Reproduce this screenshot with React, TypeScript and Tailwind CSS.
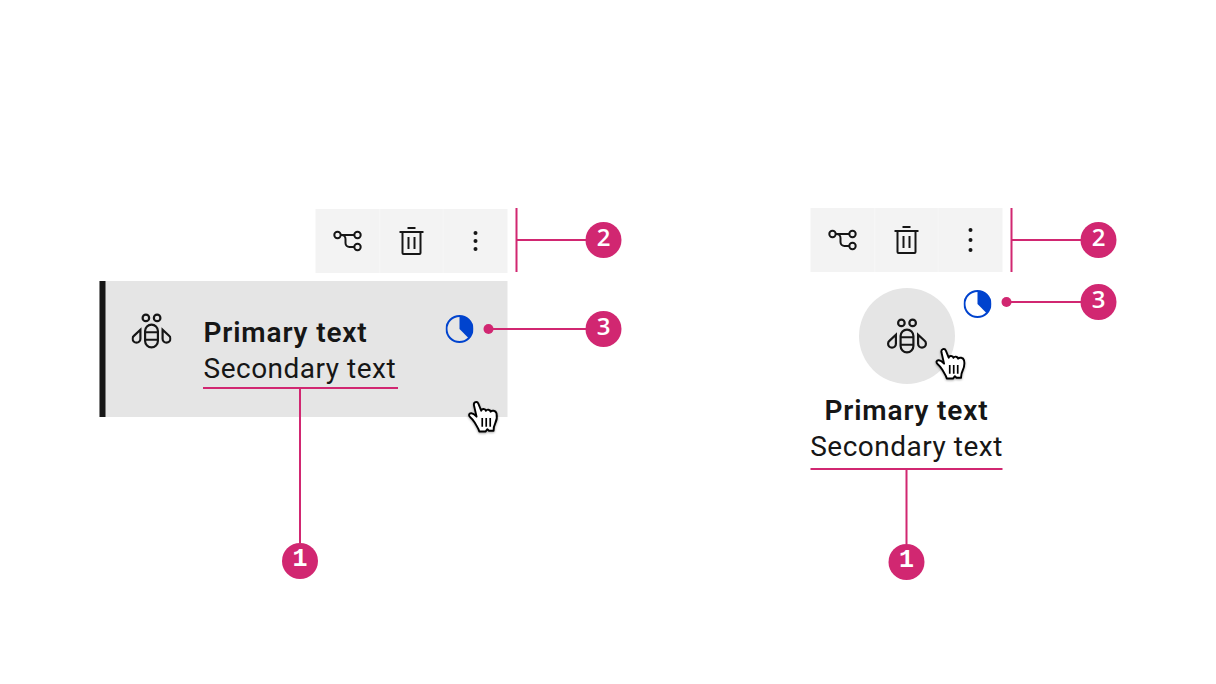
import type { ReactNode } from "react";

function Bee() {
  return (
    <svg className="h-10 w-10 shrink-0" viewBox="0 0 32 32" fill="#161616">
      <path d="M16 10a6 6 0 0 0-6 6v8a6 6 0 0 0 12 0v-8a6 6 0 0 0-6-6Zm-4.25 7.87h8.5v4.25h-8.5ZM16 28.25A4.27 4.27 0 0 1 11.75 24v-.13h8.5V24A4.27 4.27 0 0 1 16 28.25Zm4.25-12.13h-8.5V16a4.25 4.25 0 0 1 8.5 0Z" />
      <path d="M30.66 19.21 24 13v9.1a4 4 0 0 0 8 0 3.83 3.83 0 0 0-1.34-2.89ZM28 24.35a2.25 2.25 0 0 1-2.25-2.25V17l3.72 3.47A2.05 2.05 0 0 1 30.25 22 2.25 2.25 0 0 1 28 24.35Z" />
      <path d="M0 22.1a4 4 0 0 0 8 0V13l-6.66 6.21A3.88 3.88 0 0 0 0 22.1Zm2.48-1.56L6.25 17v5.1a2.25 2.25 0 0 1-4.5 0 2.05 2.05 0 0 1 .73-1.56Z" />
      <path d="M15 5.5A3.5 3.5 0 1 0 11.5 9 3.5 3.5 0 0 0 15 5.5Zm-5.25 0a1.75 1.75 0 1 1 1.75 1.75A1.77 1.77 0 0 1 9.75 5.5Z" />
      <path d="M20.5 2A3.5 3.5 0 1 0 24 5.5 3.5 3.5 0 0 0 20.5 2Zm0 5.25a1.75 1.75 0 1 1 1.75-1.75 1.77 1.77 0 0 1-1.75 1.75Z" />
    </svg>
  );
}

function Progress() {
  return (
    <svg className="h-7 w-7" viewBox="0 0 28 28">
      <circle cx="14" cy="14" r="13" fill="none" stroke="#0043ce" strokeWidth="2" />
      <path d="M14 1v13l9.2 9.2A13 13 0 0 0 14 1Z" fill="#0043ce" />
    </svg>
  );
}

function Hand() {
  return (
    <svg className="h-[43px] w-[42px] overflow-visible drop-shadow-[0_1px_1px_rgba(0,0,0,0.35)]" viewBox="0 0 40 40" preserveAspectRatio="none">
      <path
        d="M11.6 25.6 C10.5 23.8 9 21.9 7.4 20.6 C5.2 18.8 6.3 16.8 8.5 17 C10.5 17.2 12 18.7 13.4 20.1 L10.9 9.6 C10.3 6.5 14 5.3 15.2 8.2 L17.8 14.6 C18.4 12.5 21.8 12.6 22.3 14.8 C23.2 13 26.3 13.3 26.8 15.5 C28 14 31.6 14.3 32.4 17.1 C33.2 20.6 32.4 24 31.1 26.5 C29.8 29 29.5 30.5 29.6 33.3 L25.2 33.3 L23.7 31.8 L21.9 34 L16 34 C15.4 31 13.4 28.8 11.6 25.6Z"
        fill="#fff"
        stroke="#000"
        strokeWidth="1.8"
        strokeLinejoin="round"
      />
      <path d="M18.8 21.5v8M22.6 21.5v8M26.4 21.5v8" stroke="#000" strokeWidth="1.6" />
    </svg>
  );
}

function Toolbar({ spread }: { spread: number }) {
  const cell = "flex h-16 w-16 items-center justify-center bg-[#f3f3f3]";
  return (
    <div className="flex w-48">
      <div className={cell}>
        <svg className="h-8 w-8" viewBox="0 0 32 32" fill="none" stroke="#161616" strokeWidth="2">
          <circle cx="6" cy="10" r="3.2" />
          <circle cx="26" cy="10" r="3.2" />
          <circle cx="26" cy="22" r="3.2" />
          <path d="M9 10h14M10 10a4 4 0 0 1 4 4v4a4 4 0 0 0 4 4h5" />
        </svg>
      </div>
      <div className={cell + " shadow-[inset_1px_0_0_#f6f6f6,inset_-1px_0_0_#f6f6f6]"}>
        <svg className="h-8 w-8" viewBox="0 0 32 32" fill="#161616">
          <path d="M12 12h2v12h-2zM18 12h2v12h-2zM4 6v2h2v20a2 2 0 0 0 2 2h16a2 2 0 0 0 2-2V8h2V6Zm4 22V8h16v20ZM12 2h8v2h-8z" />
        </svg>
      </div>
      <div className={cell}>
        <svg className="h-8 w-8" viewBox="0 0 32 32" fill="#161616">
          <circle cx="16" cy={16 - spread} r="2" />
          <circle cx="16" cy="16" r="2" />
          <circle cx="16" cy={16 + spread} r="2" />
        </svg>
      </div>
    </div>
  );
}

function Badge({ children }: { children: ReactNode }) {
  return (
    <div className="flex h-9 w-9 shrink-0 items-center justify-center rounded-full bg-[#d12771] pb-[6px] font-['Open_Sans',sans-serif] text-[24px] leading-none font-semibold text-white">
      {children}
    </div>
  );
}

function SlabOne() {
  return <span className="pt-[3px] font-['Liberation_Mono',monospace] text-[25px] font-bold">1</span>;
}

function BracketCallout() {
  return (
    <div className="flex translate-x-[-0.5px] items-center">
      <div className="h-16 w-0.5 bg-[#d12771]" />
      <div className="-ml-px h-0.5 w-[70px] bg-[#d12771]" />
      <div className="-ml-px"><Badge>2</Badge></div>
    </div>
  );
}

function DotCallout() {
  return (
    <div className="flex w-full translate-x-[-0.5px] items-center">
      <div className="h-2.5 w-2.5 rounded-full bg-[#d12771]" />
      <div className="-mx-0.5 h-0.5 grow bg-[#d12771]" />
      <Badge>3</Badge>
    </div>
  );
}

function Labels() {
  return (
    <div className="text-[28px] leading-9 whitespace-nowrap text-[#161616]">
      <div className="font-semibold tracking-[0.85px]">Primary text</div>
      <div className="tracking-[0.5px]">Secondary text</div>
    </div>
  );
}

export default function App() {
  return (
    <main className="flex h-[684px] w-[1216px] overflow-hidden bg-white font-[Roboto,sans-serif]">
      <section className="relative w-[710px] shrink-0 pt-[209px] pl-[100px]">
        <div className="flex w-[408px] translate-x-[-0.5px] flex-col items-end gap-2">
          <Toolbar spread={8} />
          <div className="flex h-[136px] w-full border-l-6 border-[#161616] bg-[#e5e5e5] pl-[26px]">
            <div className="pt-[30px]"><Bee /></div>
            <div className="w-[242px] pt-[34px] pl-8"><Labels /></div>
            <div className="pt-[34px] pl-[32px]"><Progress /></div>
          </div>
        </div>
        <div className="absolute top-[208px] left-[516px]"><BracketCallout /></div>
        <div className="absolute top-[311px] left-[484px] w-[138px]"><DotCallout /></div>
        <div className="absolute top-[387px] left-[202.5px] flex w-[195px] flex-col items-center">
          <div className="h-0.5 w-full bg-[#d12771]" />
          <div className="h-[154px] w-0.5 bg-[#d12771]" />
          <Badge><SlabOne /></Badge>
        </div>
        <div className="absolute top-[395px] left-[462px] translate-x-[0.5px]"><Hand /></div>
      </section>
      <section className="relative grow pt-[208px] pl-[101px]">
        <div className="flex w-48 translate-x-[-0.5px] flex-col items-center">
          <Toolbar spread={10} />
          <div className="mt-4 flex h-24 w-24 translate-x-[0.5px] items-center justify-center rounded-full bg-[#e5e5e5]"><Bee /></div>
          <div className="mt-[9px] text-center"><Labels /></div>
        </div>
        <div className="absolute top-[290px] left-[254px] translate-x-[-0.5px]"><Progress /></div>
        <div className="absolute top-[208px] left-[301px]"><BracketCallout /></div>
        <div className="absolute top-[284px] left-[292px] w-[115px]"><DotCallout /></div>
        <div className="absolute top-[468px] left-[101px] flex w-48 translate-x-[-0.5px] flex-col items-center">
          <div className="h-0.5 w-full bg-[#d12771]" />
          <div className="h-[74px] w-0.5 bg-[#d12771]" />
          <Badge><SlabOne /></Badge>
        </div>
        <div className="absolute top-[341.5px] left-[219.5px]"><Hand /></div>
      </section>
    </main>
  );
}
